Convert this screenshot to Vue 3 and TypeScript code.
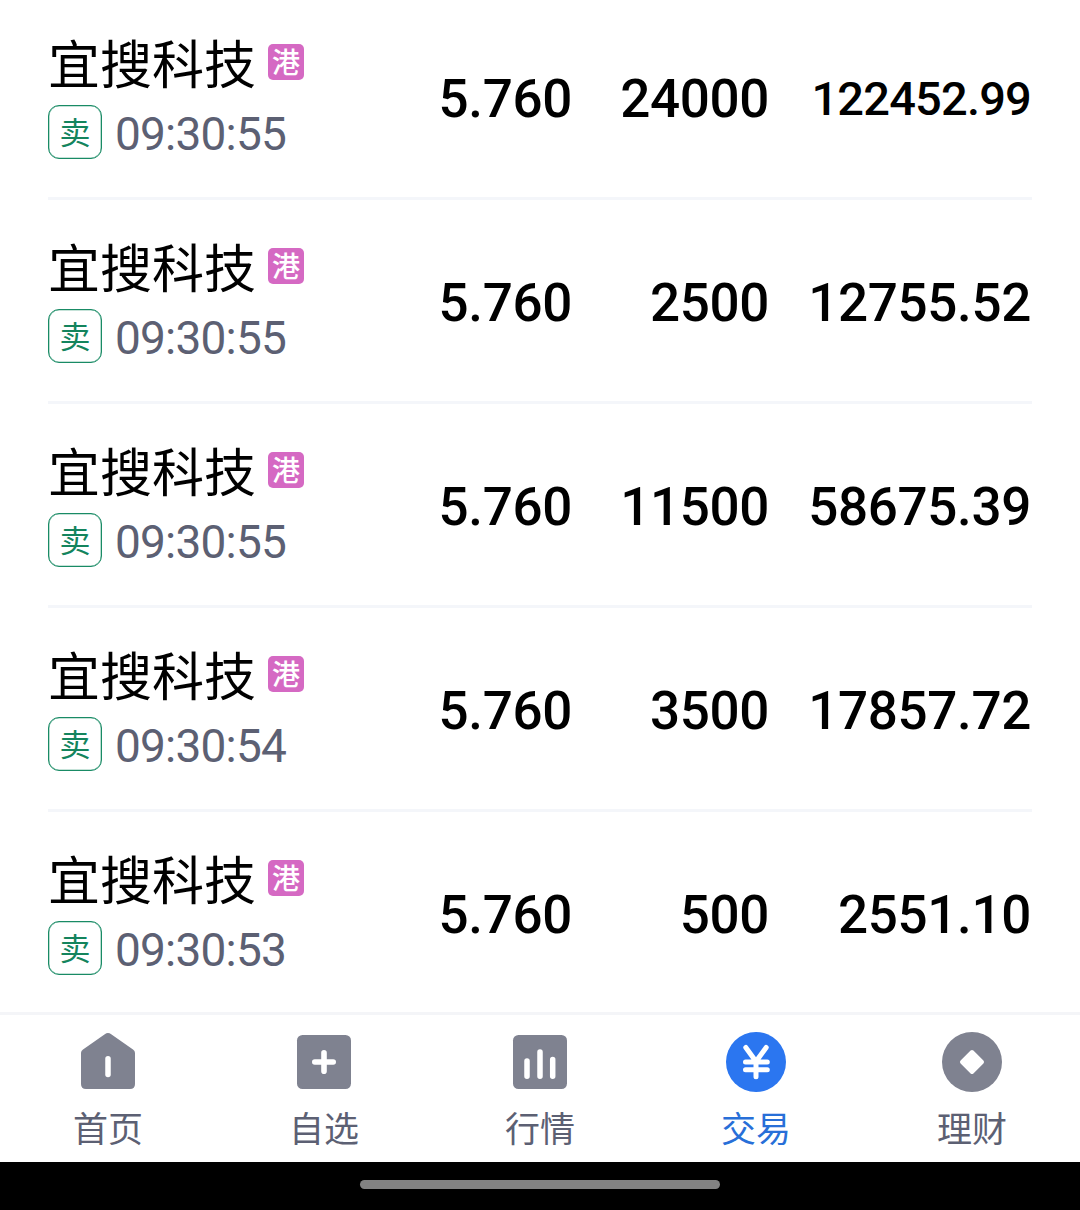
<script setup lang="ts">
interface Trade { time: string; price: string; qty: string; amount: string; small?: boolean }
const trades: Trade[] = [
  { time: '09:30:55', price: '5.760', qty: '24000', amount: '122452.99', small: true },
  { time: '09:30:55', price: '5.760', qty: '2500', amount: '12755.52' },
  { time: '09:30:55', price: '5.760', qty: '11500', amount: '58675.39' },
  { time: '09:30:54', price: '5.760', qty: '3500', amount: '17857.72' },
  { time: '09:30:53', price: '5.760', qty: '500', amount: '2551.10' },
]
const tabs = ['首页', '自选', '行情', '交易', '理财']
</script>

<template>
  <div class="screen">
    <main class="list">
      <section v-for="(t, i) in trades" :key="i" class="row">
        <div class="stock">
          <div class="title"><span class="name">宜搜科技</span><span class="market">港</span></div>
          <div class="sub"><span class="side">卖</span><span class="time">{{ t.time }}</span></div>
        </div>
        <span class="num price">{{ t.price }}</span>
        <span class="num qty">{{ t.qty }}</span>
        <span class="num amount" :class="{ small: t.small }">{{ t.amount }}</span>
      </section>
    </main>
    <nav class="tabs">
      <div v-for="(label, i) in tabs" :key="label" class="tab" :class="{ active: i === 3 }">
        <svg width="64" height="64" viewBox="0 0 64 64" fill="currentColor">
          <template v-if="i === 0">
            <path d="M28.800 4.300Q32 1.900 35.200 4.300L57 19.400Q59 20.800 59 23V54Q59 59 54 59H10Q5 59 5 54V23Q5 20.800 7 19.400Z" />
            <path d="M32 28.700V44.600" stroke="#fff" stroke-width="5.500" stroke-linecap="round" />
          </template>
          <template v-else-if="i === 1">
            <rect x="5" y="5" width="54" height="54" rx="5.500" />
            <path d="M22.800 32H41.200M32 22.800V41.200" stroke="#fff" stroke-width="5.600" stroke-linecap="round" />
          </template>
          <template v-else-if="i === 2">
            <rect x="5" y="5" width="54" height="54" rx="5.500" />
            <path d="M19 31.100V46.200M32 21.900V46.200M44.700 29.500V46.200" stroke="#fff" stroke-width="5.500" stroke-linecap="round" />
          </template>
          <template v-else-if="i === 3">
            <circle cx="32" cy="32" r="30" />
            <path d="M21.800 17.500L32 31.500L42.200 17.500M21.500 31.900H43.300M21.500 39.700H43.300M32 31V46.700" fill="none" stroke="#fff" stroke-width="5" stroke-linecap="round" stroke-linejoin="round" />
          </template>
          <template v-else>
            <circle cx="32" cy="32" r="30" />
            <path d="M32 22L42 32L32 42L22 32Z" fill="#fff" stroke="#fff" stroke-width="4" stroke-linejoin="round" />
          </template>
        </svg>
        <span>{{ label }}</span>
      </div>
    </nav>
    <footer class="gesture"><i></i></footer>
  </div>
</template>

<style>
body { margin: 0; }
</style>
<style scoped>
.screen { width: 1080px; height: 1210px; overflow: hidden; background: #fff; color: #000; font-family: Roboto, "Noto Sans CJK SC", sans-serif; display: flex; flex-direction: column; }
.list { height: 1012px; padding: 0 48px; flex: none; overflow: hidden; }
.row { height: 204px; box-sizing: border-box; border-bottom: 3px solid #f4f6fa; display: flex; }
.row:first-child { height: 200px; }
.row:first-child .stock { padding-top: 30px; }
.row:first-child .num { padding-top: 68px; }
.stock { width: 344px; padding-top: 34px; }
.title { height: 64px; display: flex; align-items: center; }
.name { font-size: 52px; line-height: 64px; width: 208px; white-space: nowrap; padding-top: 9px; }
.market { margin-left: 12px; width: 36px; height: 36px; border-radius: 5px; background: #d569c3; color: #fff; font-size: 28px; line-height: 39px; text-align: center; font-weight: 500; }
.sub { margin-top: 11px; display: flex; align-items: center; height: 54px; }
.side { box-sizing: border-box; width: 54px; height: 54px; border: 1.500px solid #198b65; box-shadow: inset 0 0 0 .3px #198b65; border-radius: 11px; color: #14845d; font-size: 31px; line-height: 55px; text-align: center; }
.time { margin-left: 13px; color: #5c6073; font-size: 46px; letter-spacing: -.8px; line-height: 54px; padding-top: 4px; }
.num { padding-top: 72px; font-size: 53px; letter-spacing: -.35px; line-height: 62px; font-weight: 500; text-align: right; }
.price { width: 180px; }
.qty { width: 197px; }
.amount { width: 262px; }
.amount.small { font-size: 47px; letter-spacing: -.8px; }
.tabs { height: 150px; box-sizing: border-box; border-top: 3px solid #f4f5f8; display: flex; flex: none; }
.tab { width: 216px; display: flex; flex-direction: column; align-items: center; padding-top: 15px; color: #7f8290; }
.tab span { font-size: 35px; line-height: 50px; margin-top: 12px; color: #5c6073; }
.tab.active { color: #2b76f0; }
.tab.active span { color: #286fd8; }
.gesture { height: 48px; background: #000; display: flex; justify-content: center; align-items: center; }
.gesture i { width: 360px; height: 9px; border-radius: 5px; background: #828282; margin-bottom: 3px; }
</style>
